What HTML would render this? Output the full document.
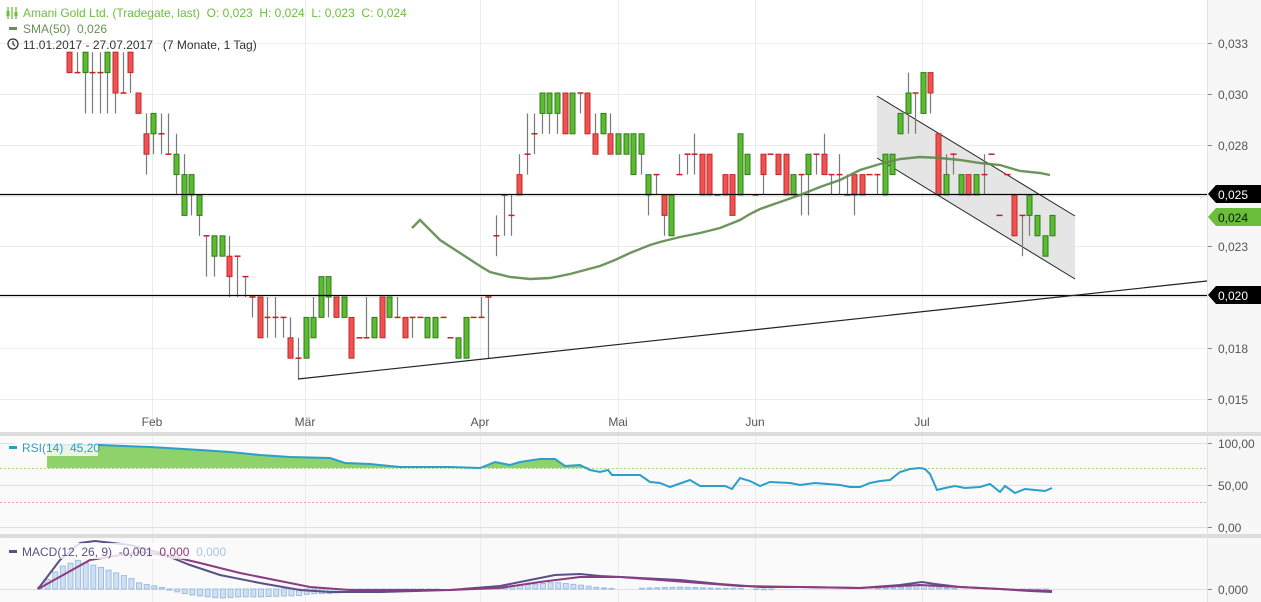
<!DOCTYPE html>
<html><head><meta charset="utf-8"><style>
html,body{margin:0;padding:0;background:#fff;width:1261px;height:602px;overflow:hidden;font-family:"Liberation Sans",Arial,sans-serif}
svg{position:absolute;left:0;top:0}
svg text{font-family:"Liberation Sans",Arial,sans-serif}
</style></head><body>
<svg id="s" width="1261" height="602" xmlns="http://www.w3.org/2000/svg">
<!-- backgrounds -->
<rect x="0" y="0" width="1261" height="602" fill="#fff"/>
<rect x="0" y="436" width="1207" height="98" fill="#fafafa"/>
<rect x="0" y="538" width="1207" height="64" fill="#fafafa"/>
<rect x="1207" y="0" width="54" height="602" fill="#f7f7f7"/>
<line x1="1207.5" y1="0" x2="1207.5" y2="602" stroke="#e2e2e2"/>
<!-- grid main -->
<g stroke="#ececec" stroke-width="1">
<line x1="0" y1="43.5" x2="1207" y2="43.5"/><line x1="0" y1="94.5" x2="1207" y2="94.5"/>
<line x1="0" y1="145.5" x2="1207" y2="145.5"/><line x1="0" y1="196.5" x2="1207" y2="196.5"/>
<line x1="0" y1="246.5" x2="1207" y2="246.5"/><line x1="0" y1="297.5" x2="1207" y2="297.5"/>
<line x1="0" y1="348.5" x2="1207" y2="348.5"/><line x1="0" y1="399.5" x2="1207" y2="399.5"/>
<line x1="152.5" y1="0" x2="152.5" y2="602"/><line x1="305.5" y1="0" x2="305.5" y2="602"/>
<line x1="480.5" y1="0" x2="480.5" y2="602"/><line x1="618.5" y1="0" x2="618.5" y2="602"/>
<line x1="755.5" y1="0" x2="755.5" y2="602"/><line x1="922.5" y1="0" x2="922.5" y2="602"/>
</g>
<g stroke="#e0e0e0"><line x1="0" y1="443.5" x2="1207" y2="443.5"/><line x1="0" y1="485.5" x2="1207" y2="485.5"/><line x1="0" y1="527.5" x2="1207" y2="527.5"/><line x1="0" y1="589.5" x2="1207" y2="589.5"/></g>
<line x1="0" y1="468.5" x2="1207" y2="468.5" stroke="#a6dc7c" stroke-dasharray="2,2"/>
<line x1="0" y1="502.5" x2="1207" y2="502.5" stroke="#f4a0a0" stroke-dasharray="2,2"/>
<!-- separators -->
<rect x="0" y="432" width="1261" height="4" fill="#dcdcdc"/>
<rect x="0" y="534" width="1261" height="4" fill="#dcdcdc"/>
<!-- channel -->
<polygon points="877,96 1075,216 1075,279 877,158" fill="#e2e2e2" fill-opacity="0.9"/>
<line x1="877" y1="96" x2="1075" y2="216" stroke="#222" stroke-width="1"/>
<line x1="877" y1="158" x2="1075" y2="279" stroke="#222" stroke-width="1"/>
<g id="candles"></g>
<!-- horizontal lines -->
<line x1="0" y1="194.5" x2="1207" y2="194.5" stroke="#000" stroke-width="1.2"/>
<line x1="0" y1="295.5" x2="1207" y2="295.5" stroke="#000" stroke-width="1.2"/>
<line x1="298" y1="379" x2="1207" y2="281" stroke="#222" stroke-width="1.2"/>
<!-- SMA -->
<polyline fill="none" stroke="#5e8a4a" stroke-width="2.4" stroke-opacity="0.9" points="412,228 420,220 430,230 440,240 460,253 480,266 490,272 510,277 530,279 550,278 570,274 600,266 615,260 630,253 650,245 660,242 680,237 700,233 720,228 740,220 750,214 760,209 780,202 800,195 820,187 840,180 860,170 880,164 900,159 920,157 940,158 960,160 980,163 1000,165 1020,171 1040,173 1050,175"/>
<!-- RSI -->
<polygon fill="#8fd16a" points="47,468 47,445 100,445 150,447 200,450 230,452 260,455 290,457 330,458 345,463 370,464 400,467 450,467 480,468 495,462 510,465 520,462 540,459 555,459 565,466 580,465 590,468"/>
<polyline fill="none" stroke="#2b9fca" stroke-width="2" points="47,445 100,445 150,447 200,450 230,452 260,455 290,457 330,458 345,463 370,464 400,467 450,467 480,468 495,462 510,465 520,462 540,459 555,459 565,466 580,465 590,470 600,472 608,470 612,475 640,475 650,482 660,483 670,487 690,480 700,486 725,486 732,489 740,478 750,481 760,486 770,482 790,483 800,485 815,483 840,485 850,487 860,487 870,483 880,481 890,480 900,472 910,469 920,468 925,469 930,474 937,490 945,488 955,486 965,488 980,487 990,484 1000,492 1005,486 1015,493 1025,489 1035,490 1045,491 1052,488"/>
<g id="hist"></g>
<polyline id="macd" fill="none" stroke="#5b4f87" stroke-width="2" points="38,589 60,560 80,543 95,541 130,545 160,553 190,565 220,575 260,583 300,590 330,592 380,592 450,590 500,586 530,580 555,575 580,574 600,576 640,578 680,580 720,584 760,587 800,587 860,588 900,585 922,582 935,584 960,587 1000,589 1030,591 1052,592"/>
<polyline id="sig" fill="none" stroke="#8e3a80" stroke-width="2" points="38,589 90,560 140,552 170,556 200,563 240,573 280,581 310,587 350,590 400,590 450,590 500,588 540,582 580,577 620,577 660,580 700,583 740,586 800,587 860,588 920,585 940,586 980,588 1020,590 1052,591"/>
<!-- legends -->
<rect x="15" y="440" width="83" height="16" fill="#fff" fill-opacity="0.8"/>
<rect x="10" y="543" width="200" height="16" fill="#fff" fill-opacity="0.8"/>
<rect x="9" y="446" width="8" height="3" fill="#2b9fca"/>
<text x="22" y="452" font-size="12" fill="#2b9fca">RSI(14)&#160;&#160;45,20</text>
<rect x="9" y="550" width="8" height="3" fill="#5b4f87"/>
<text x="22" y="556" font-size="12" fill="#5b4f87">MACD(12, 26, 9)&#160;&#160;-0,001&#160;&#160;<tspan fill="#8e3a80">0,000</tspan>&#160;&#160;<tspan fill="#a9c4e4">0,000</tspan></text>
<g stroke="#6abf3a" stroke-width="1.3" fill="none"><line x1="8" y1="7" x2="8" y2="19"/><line x1="12" y1="7" x2="12" y2="19"/><line x1="16" y1="7" x2="16" y2="19"/></g>
<rect x="6.5" y="11" width="3" height="5" fill="#6abf3a"/><rect x="14.5" y="12" width="3" height="4" fill="#6abf3a"/>
<text x="23" y="17" font-size="12" fill="#6abf3a">Amani Gold Ltd. (Tradegate, last)&#160;&#160;O: 0,023&#160;&#160;H: 0,024&#160;&#160;L: 0,023&#160;&#160;C: 0,024</text>
<rect x="9" y="27" width="8" height="3" fill="#6b8f5a"/>
<text x="23" y="33" font-size="12" fill="#6b8f5a">SMA(50)&#160;&#160;0,026</text>
<circle cx="13" cy="44" r="5" fill="none" stroke="#333" stroke-width="1.3"/><path d="M13 41 V44 L15 46" fill="none" stroke="#333" stroke-width="1.2"/>
<text x="23" y="49" font-size="12" fill="#333">11.01.2017 - 27.07.2017&#160;&#160;&#160;(7 Monate, 1 Tag)</text>
<!-- month labels -->
<g font-size="12" fill="#555" text-anchor="middle">
<text x="152" y="426">Feb</text><text x="305" y="426">Mär</text><text x="480" y="426">Apr</text>
<text x="618" y="426">Mai</text><text x="755" y="426">Jun</text><text x="922" y="426">Jul</text></g>
<!-- axis labels -->
<g stroke="#888"><line x1="1208" y1="43.5" x2="1212" y2="43.5"/><line x1="1208" y1="94.5" x2="1212" y2="94.5"/><line x1="1208" y1="145.5" x2="1212" y2="145.5"/><line x1="1208" y1="246.5" x2="1212" y2="246.5"/><line x1="1208" y1="348.5" x2="1212" y2="348.5"/><line x1="1208" y1="399.5" x2="1212" y2="399.5"/><line x1="1208" y1="443.5" x2="1212" y2="443.5"/><line x1="1208" y1="485.5" x2="1212" y2="485.5"/><line x1="1208" y1="527.5" x2="1212" y2="527.5"/><line x1="1208" y1="589.5" x2="1212" y2="589.5"/></g>
<g font-size="12" fill="#555">
<text x="1218" y="48">0,033</text><text x="1218" y="99">0,030</text><text x="1218" y="150">0,028</text>
<text x="1218" y="251">0,023</text><text x="1218" y="353">0,018</text><text x="1218" y="404">0,015</text>
<text x="1218" y="448">100,00</text><text x="1218" y="490">50,00</text><text x="1218" y="532">0,00</text>
<text x="1218" y="594">0,000</text></g>
<polygon points="1208,194 1216,185 1261,185 1261,203 1216,203" fill="#000"/>
<text x="1218" y="199" font-size="12" fill="#fff">0,025</text>
<polygon points="1208,217 1216,208 1261,208 1261,226 1216,226" fill="#6abf3a"/>
<text x="1218" y="222" font-size="12" fill="#111">0,024</text>
<polygon points="1208,295 1216,286 1261,286 1261,304 1216,304" fill="#000"/>
<text x="1218" y="300" font-size="12" fill="#fff">0,020</text>
</svg>
<script>
(function(){
var C=[[32,31,32,31],[31,31,32,31],[31,32,32,29],[31,31,32,29],[31,31,32,29],[31,32,32,29],[32,30,32,29],[30,30,32,30],[32,31,32,30],[30,29,30,29],
[28,27,29,26],[28,29,29,27],[28,28,29,27],[27,27,29,27],[26,27,28,25],[24,26,27,24],[25,26,26,24],[24,25,25,23],[23,23,23,21],[22,23,23,21],
[22,23,23,22],[22,21,23,20],[22,22,22,20],[21,21,21,20],[20,20,20,19],[20,18,20,18],[19,19,20,18],[19,19,20,18],[19,19,19,18],[18,17,19,17],
[17,17,18,16],[17,19,19,17],[18,19,20,18],[19,21,21,19],[20,21,21,19],[20,19,20,19],[19,20,20,19],[19,17,19,17],[18,18,18,18],[18,18,20,18],
[18,19,19,18],[20,18,20,18],[19,20,20,19],[19,19,20,19],[19,18,19,18],[19,19,19,18],[19,19,19,19],[18,19,19,18],[18,19,19,18],[19,19,19,19],
[18,18,18,18],[17,18,18,17],[17,19,19,17],[19,19,19,19],[19,19,20,19],[20,20,20,17],[23,23,24,22],[25,25,25,23],[24,24,25,23],[26,25,27,25],
[27,27,29,26],[28,28,29,27],[29,30,30,28],[29,30,30,28],[29,30,30,28],[30,28,30,28],[28,30,30,28],[30,30,30,29],[30,28,30,28],[28,27,29,27],
[28,29,29,28],[28,27,29,27],[27,28,28,27],[27,28,28,27],[26,28,28,26],[27,28,28,26],[25,26,26,24],[26,26,26,25],[25,24,25,23],[23,25,25,23],
[26,26,27,26],[27,27,27,26],[27,27,28,26],[27,25,27,25],[27,25,27,25],[25,25,25,25],[26,25,26,25],[26,24,26,24],[25,28,28,25],[26,27,27,26],
[25,25,25,25],[27,26,27,25],[27,27,27,27],[27,26,27,26],[27,25,27,25],[25,26,26,25],[26,26,26,24],[26,27,27,24],[27,27,27,26],[27,26,28,26],
[26,26,26,25],[26,26,27,25],[25,25,26,25],[26,25,26,24],[26,25,26,25],[26,26,26,26],[26,26,26,25],[25,27,27,25],[26,27,27,26],[28,29,29,28],
[29,30,31,28],[30,30,30,28],[29,31,31,29],[31,30,31,29],[28,25,28,25],[25,26,27,25],[27,27,27,26],[25,26,26,25],[26,25,26,25],[25,26,26,25],
[26,26,27,25],[27,27,27,27],[24,24,24,24],[26,26,26,26],[25,23,25,23],[24,24,24,22],[24,25,25,23],[23,24,24,23],[22,23,23,22],[23,24,24,23]];
var NS="http://www.w3.org/2000/svg",g=document.getElementById("candles");
function Y(p){return 297-(p-20)*20.4;}
function el(n,a){var e=document.createElementNS(NS,n);for(var k in a)e.setAttribute(k,a[k]);return e;}
for(var i=0;i<C.length;i++){var c=C[i],x=Math.round(69.3+i*7.62)+0.5;
 g.appendChild(el("line",{x1:x,x2:x,y1:Y(c[2]),y2:Y(c[3]),stroke:"#7a7a7a","stroke-width":1.2}));
 if(c[0]==c[1]){g.appendChild(el("line",{x1:x-3,x2:x+3,y1:Y(c[0]),y2:Y(c[0]),stroke:"#c62020","stroke-width":1.5}));}
 else{var up=c[1]>c[0],t=Y(Math.max(c[0],c[1])),b=Y(Math.min(c[0],c[1]));
 g.appendChild(el("rect",{x:x-2.5,y:t,width:5,height:b-t,fill:up?"#5cbb2f":"#f05252",stroke:up?"#2e7d1a":"#c22a2a","stroke-width":1}));}}
function pts(id){return document.getElementById(id).getAttribute("points").trim().split(/\s+/).map(function(s){return s.split(",").map(Number);});}
function at(P,x){for(var i=1;i<P.length;i++){if(x<=P[i][0]){var a=P[i-1],b=P[i];return a[1]+(b[1]-a[1])*(x-a[0])/(b[0]-a[0]);}}return P[P.length-1][1];}
var M=pts("macd"),S=pts("sig"),h=document.getElementById("hist");
for(var x=40;x<=1052;x+=7.62){var d=(at(S,x)-at(M,x))*1.3,y0=589;
 if(Math.abs(d)<0.5)continue;
 var top=d>0?y0-d:y0,hh=Math.abs(d);
 h.appendChild(el("rect",{x:x-2.5,y:top,width:5,height:hh,fill:"#cfe0f5",stroke:"#9dbde0","stroke-width":1}));}
})();
</script>
</body></html>
